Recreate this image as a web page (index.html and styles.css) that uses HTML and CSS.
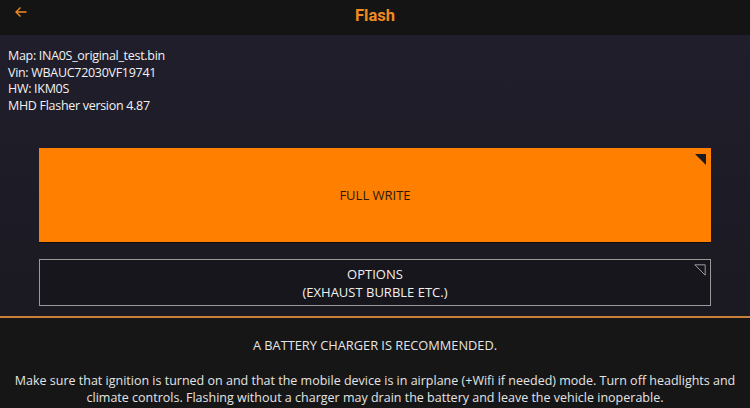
FILE: index.html
```html
<!DOCTYPE html>
<html>
<head>
<meta charset="utf-8">
<link rel="stylesheet" href="styles.css">
</head>
<body>
<header class="topbar">
  <span class="back">
    <svg width="14" height="14" viewBox="0 0 14 14"><path d="M12.5 7H2M6.5 2.5L2 7L6.5 11.5" fill="none" stroke="#f28a1e" stroke-width="1.4"/></svg>
  </span>
  <h1 class="title">Flash</h1>
</header>
<main class="content">
  <div class="info">
    <div>Map: INA0S_original_test.bin</div>
    <div>Vin: WBAUC72030VF19741</div>
    <div>HW: IKM0S</div>
    <div>MHD Flasher version 4.87</div>
  </div>
  <div class="btn btn-primary">FULL WRITE<span class="corner"></span></div>
  <div class="btn btn-outline">OPTIONS<br>(EXHAUST BURBLE ETC.)
    <svg class="corner-svg" width="12" height="12" viewBox="0 0 12 12"><path d="M0.8 0.8H11.2V11.2Z" fill="none" stroke="#9a9a9a" stroke-width="1"/></svg>
  </div>
</main>
<footer class="notice">
  <p class="warn">A BATTERY CHARGER IS RECOMMENDED.</p>
  <p class="desc">Make sure that ignition is turned on and that the mobile device is in airplane (+Wifi if needed) mode. Turn off headlights and climate controls. Flashing without a charger may drain the battery and leave the vehicle inoperable.</p>
</footer>
</body>
</html>
```
FILE: styles.css
```css
html, body {
  margin: 0;
  padding: 0;
  width: 750px;
  height: 408px;
  overflow: hidden;
  background: #161616;
  font-family: "Open Sans", sans-serif;
  color: #e8e8e8;
}
.topbar {
  height: 35px;
  background: #141414;
  display: flex;
  align-items: center;
  justify-content: center;
  position: relative;
}
.back {
  position: absolute;
  left: 14px;
  top: 5px;
  display: flex;
}
.title {
  margin: 0;
  font-family: Roboto, sans-serif;
  font-weight: 700;
  font-size: 16.5px;
  color: #f28a1e;
  margin-top: -5px;
}
.content {
  height: 283px;
  background: linear-gradient(#201e2b, #1b1a22);
  box-sizing: border-box;
  padding: 13px 39px 0 8px;
  border-bottom: 2px solid #c8803c;
  display: flex;
  flex-direction: column;
}
.info {
  font-size: 12.5px;
  letter-spacing: -0.3px;
  line-height: 16.6px;
  color: #f2f2f2;
}
.btn {
  position: relative;
  margin-left: 31px;
  box-sizing: border-box;
  display: flex;
  align-items: center;
  justify-content: center;
  text-align: center;
  font-size: 13px;
}
.btn-primary {
  margin-top: 34px;
  height: 94px;
  background: #ff8000;
  color: #2a1a0a;
  box-shadow: 0 1px 0 #0c0c0c;
}
.corner {
  position: absolute;
  right: 5px;
  top: 6px;
  width: 0;
  height: 0;
  border-left: 11px solid transparent;
  border-top: 11px solid #1c1b24;
}
.btn-outline {
  margin-top: 17px;
  height: 47px;
  background: #17161c;
  border: 1px solid #9a9a9a;
  color: #f0f0f0;
  line-height: 18px;
  flex-direction: column;
}
.corner-svg {
  position: absolute;
  right: 4px;
  top: 4px;
}
.notice {
  text-align: center;
  color: #e4e4e4;
  padding: 0 8px;
}
.warn {
  margin: 18px 0 0;
  font-size: 12.8px;
  line-height: 18px;
}
.desc {
  margin: 19px 0 0;
  font-size: 12.5px;
  line-height: 16.5px;
}
```
